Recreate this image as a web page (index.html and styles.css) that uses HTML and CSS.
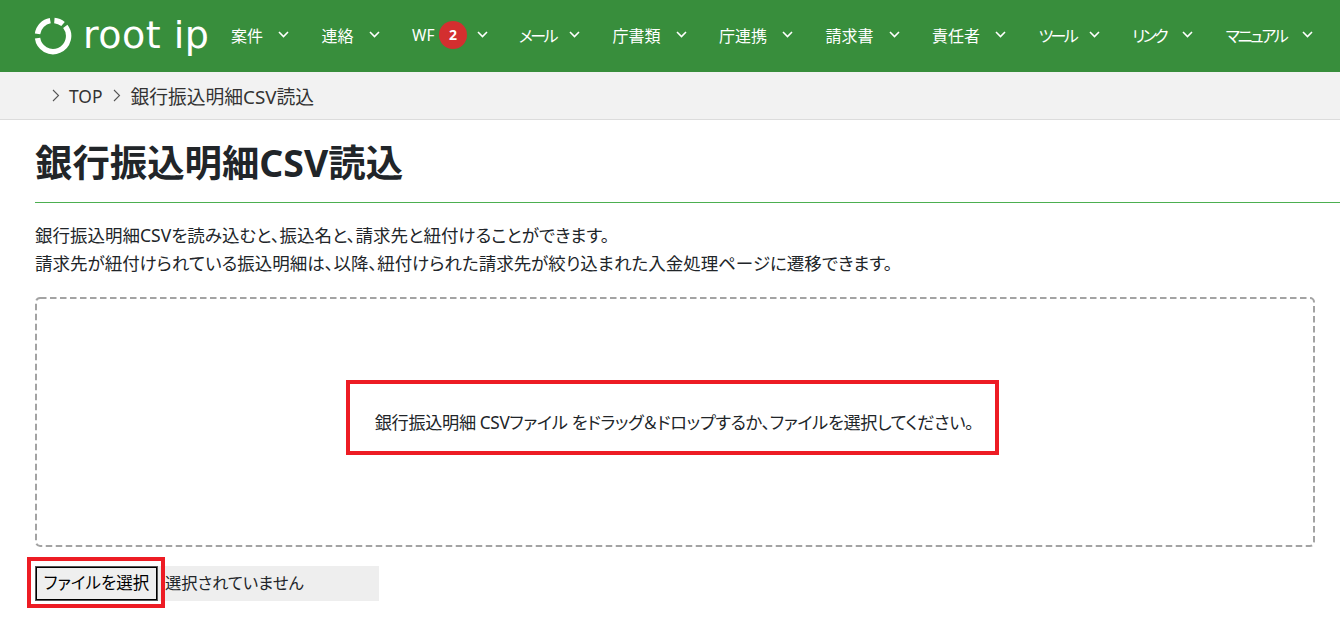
FILE: index.html
```html
<!DOCTYPE html>
<html lang="ja">
<head>
<meta charset="utf-8">
<title>銀行振込明細CSV読込</title>
<link rel="stylesheet" href="styles.css">
</head>
<body>
<header class="topbar">
  <a class="logo">
    <svg class="logo-mark" width="38" height="38" viewBox="0 0 38 38"><path d="M3.55 16.83A15.6 15.6 0 0 1 16.29 3.64M20.36 3.46A15.6 15.6 0 0 1 29.03 7.05M31.29 9.4A15.6 15.6 0 1 1 3.55 21.17" fill="none" stroke="#fff" stroke-width="5.4"/></svg>
    <span class="logo-text">root ip</span>
  </a>
  <nav class="nav">
    <a class="nav-item"><span>案件</span><svg class="chev" viewBox="0 0 11 7"><path d="M1 1l4.5 4.5L10 1"/></svg></a>
    <a class="nav-item"><span>連絡</span><svg class="chev" viewBox="0 0 11 7"><path d="M1 1l4.5 4.5L10 1"/></svg></a>
    <a class="nav-item"><span class="wf">WF</span><span class="badge">2</span><svg class="chev chev-wf" viewBox="0 0 11 7"><path d="M1 1l4.5 4.5L10 1"/></svg></a>
    <a class="nav-item"><span class="kana">メール</span><svg class="chev" viewBox="0 0 11 7"><path d="M1 1l4.5 4.5L10 1"/></svg></a>
    <a class="nav-item"><span>庁書類</span><svg class="chev" viewBox="0 0 11 7"><path d="M1 1l4.5 4.5L10 1"/></svg></a>
    <a class="nav-item"><span>庁連携</span><svg class="chev" viewBox="0 0 11 7"><path d="M1 1l4.5 4.5L10 1"/></svg></a>
    <a class="nav-item"><span>請求書</span><svg class="chev" viewBox="0 0 11 7"><path d="M1 1l4.5 4.5L10 1"/></svg></a>
    <a class="nav-item"><span>責任者</span><svg class="chev" viewBox="0 0 11 7"><path d="M1 1l4.5 4.5L10 1"/></svg></a>
    <a class="nav-item"><span class="kana">ツール</span><svg class="chev" viewBox="0 0 11 7"><path d="M1 1l4.5 4.5L10 1"/></svg></a>
    <a class="nav-item"><span class="kana">リンク</span><svg class="chev" viewBox="0 0 11 7"><path d="M1 1l4.5 4.5L10 1"/></svg></a>
    <a class="nav-item"><span class="kana-long">マニュアル</span><svg class="chev" viewBox="0 0 11 7"><path d="M1 1l4.5 4.5L10 1"/></svg></a>
  </nav>
</header>
<div class="crumbs">
  <svg class="crumb-sep" viewBox="0 0 8 13"><path d="M1 1l5.5 5.5L1 12"/></svg>
  <span class="crumb-top">TOP</span>
  <svg class="crumb-sep" viewBox="0 0 8 13"><path d="M1 1l5.5 5.5L1 12"/></svg>
  <span class="crumb-cur">銀行振込明細CSV読込</span>
</div>
<main class="content">
  <h1 class="title">銀行振込明細CSV読込</h1>
  <p class="lead">銀行振込明細CSVを読み込むと、振込名と、請求先と紐付けることができます。<br>請求先が紐付けられている振込明細は、以降、紐付けられた請求先が絞り込まれた入金処理ページに遷移できます。</p>
  <div class="dropzone">
    <svg class="dash" width="1280" height="250" viewBox="0 0 1280 250"><rect x="1" y="1" width="1278" height="248" rx="4" fill="none" stroke="#a3a3a3" stroke-width="2" stroke-dasharray="6.5 3.5"/></svg>
    <div class="callout">銀行振込明細 CSVファイル をドラッグ＆ドロップするか、ファイルを選択してください。</div>
  </div>
  <div class="file-row">
    <div class="file-mark"><button class="file-btn">ファイルを選択</button></div>
    <span class="file-name">選択されていません</span>
  </div>
</main>
</body>
</html>
```
FILE: styles.css
```css
* { box-sizing: border-box; }
html, body { margin: 0; height: 629px; overflow: hidden; }
body {
  font-family: "Noto Sans", "Noto Sans CJK JP", sans-serif;
  font-feature-settings: "palt";
  color: #212529;
  background: #fff;
  font-size: 16px;
}
.topbar {
  height: 72px;
  background: #388e3c;
  display: flex;
  align-items: center;
  padding-left: 34px;
  color: #fff;
}
.logo { display: flex; align-items: center; width: 197px; flex: none; }
.logo-mark { flex: none; }
.logo-text {
  font-family: "DejaVu Sans", sans-serif;
  font-weight: 400;
  font-size: 38px;
  letter-spacing: 0.5px;
  margin-left: 11px;
  line-height: 1;
  margin-top: -3px;
  font-feature-settings: normal;
  white-space: nowrap;
}
.nav { display: flex; align-items: center; margin-top: -3px; }
.nav-item { display: flex; align-items: center; margin-right: 32.5px; font-size: 16px; white-space: nowrap; }
.kana { letter-spacing: -2.6px; width: 35px; }
.kana-long { letter-spacing: -2.2px; width: 61px; }
.chev { width: 11px; height: 7px; margin-left: 15px; fill: none; stroke: #fff; stroke-width: 1.6; }
.chev-wf { margin-left: 10px; margin-right: -1.5px; }
.wf { font-size: 15.5px; width: 24px; }
.badge {
  width: 28px; height: 28px; border-radius: 50%;
  background: #d32f2f; color: #fff;
  display: flex; align-items: center; justify-content: center;
  font-size: 14px; font-weight: 700; margin-left: 3px;
  margin-top: 3px;
  margin-bottom: 3px;
}
.crumbs {
  height: 48px;
  background: #f2f2f2;
  border-bottom: 1px solid #dcdcdc;
  display: flex; align-items: center;
  padding-left: 52px;
  color: #333;
}
.crumb-sep { width: 8px; height: 13px; fill: none; stroke: #555; stroke-width: 1.1; margin-right: 9px; }
.crumb-top { font-size: 17.4px; margin-right: 11px; }
.crumb-cur { font-size: 18.8px; }
.content { padding-left: 35px; }
.title {
  margin: 0;
  height: 83px;
  padding-top: 16px;
  font-size: 37.4px;
  line-height: 54px;
  font-weight: 700;
  border-bottom: 1px solid #4caf50;
}
.lead { margin: 18px 0 20px; font-size: 17.5px; line-height: 28px; }
.dropzone {
  position: relative;
  width: 1280px; height: 250px;
  display: flex; align-items: center; justify-content: center;
}
.dash { position: absolute; top: 0; left: 0; }
.callout {
  position: relative;
  width: 653px; height: 75px;
  margin: 0 5px 9px 0;
  border: 4px solid #ed1c24;
  display: flex; align-items: center; justify-content: center;
  font-size: 17.2px;
  letter-spacing: -0.35px;
  padding: 8px 0 0 3px;
  white-space: nowrap;
}
.file-row { display: flex; align-items: center; width: 344px; height: 35px; margin-top: 19px; background: #eee; }
.file-mark { position: relative; display: flex; }
.file-mark::after {
  content: "";
  position: absolute;
  top: -9px; left: -8px; right: -7px; bottom: -7px;
  border: 4px solid #ed1c24;
  pointer-events: none;
}
.file-btn {
  width: 123px; height: 35px;
  padding: 0 0 3px;
  border: 2px solid #000;
  outline: 1px solid #555;
  outline-offset: -1px;
  background: #efefef;
  color: #000;
  font: inherit;
  font-size: 16.5px;
  font-feature-settings: inherit;
}
.file-name { font-size: 16.3px; margin-left: 7px; padding-bottom: 3px; color: #212529; }
```
